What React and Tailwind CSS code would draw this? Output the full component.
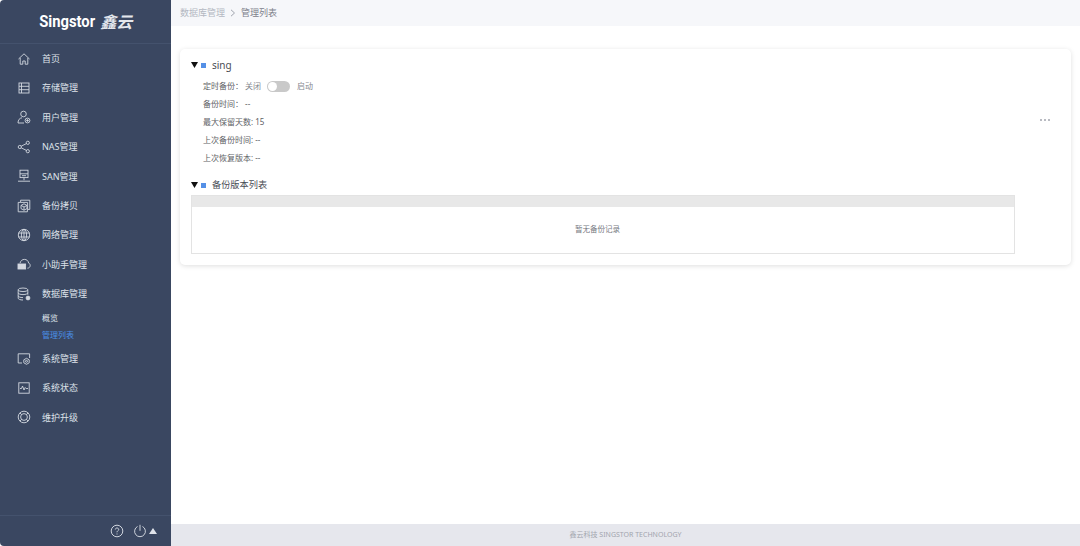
import React from 'react'

const Icon = ({ children }) => (
  <svg width="14" height="14" viewBox="0 0 14 14" fill="none" stroke="#d3d8e0" strokeWidth="0.9" className="shrink-0">
    {children}
  </svg>
)

const menuTop = [
  {
    label: '首页',
    icon: <path d="M1.5 7 7 1.8 12.5 7M3.2 6v6.2h2.6V9h2.4v3.2h2.6V6" />,
  },
  {
    label: '存储管理',
    icon: (
      <>
        <rect x="2" y="2" width="10" height="10" />
        <path d="M4.5 2v10M2 5.3h10M2 8.7h10" />
      </>
    ),
  },
  {
    label: '用户管理',
    icon: (
      <>
        <circle cx="6.5" cy="4" r="2.8" />
        <path d="M1 13c0-3 1.6-5 4-5.2M1 13h6" />
        <circle cx="10.5" cy="10.5" r="2.4" />
        <circle cx="10.5" cy="10.5" r="0.8" fill="#d3d8e0" />
      </>
    ),
  },
  {
    label: 'NAS管理',
    icon: (
      <>
        <circle cx="2.8" cy="7" r="1.6" />
        <circle cx="10.8" cy="2.8" r="1.6" />
        <circle cx="10.8" cy="11.2" r="1.6" />
        <path d="M4.2 6.2 9.4 3.6M4.2 7.8l5.2 2.6" />
      </>
    ),
  },
  {
    label: 'SAN管理',
    icon: (
      <>
        <rect x="3" y="1.2" width="8" height="7.4" />
        <path d="M3 4.8h8M7 8.6v2.6M1 12.2h12M5 6.7h4" />
      </>
    ),
  },
  {
    label: '备份拷贝',
    icon: (
      <>
        <path d="M1.2 3.4h2.400V1.200h9.200v9.200h-2.400v2.400H1.200z" />
        <path d="M3.600 3.400h7v7" />
        <path d="M7 4.800l3 1.600v3.200l-3 1.600-3-1.600V6.400zM4 6.400l3 1.600 3-1.600M7 8v3.200" />
      </>
    ),
  },
  {
    label: '网络管理',
    icon: (
      <>
        <circle cx="7" cy="7" r="5.7" />
        <ellipse cx="7" cy="7" rx="2.6" ry="5.7" />
        <path d="M7 1.3v11.4M1.5 5h11M1.5 9h11" />
      </>
    ),
  },
  {
    label: '小助手管理',
    icon: (
      <>
        <path d="M3 6.2C3.6 3.6 5.4 2.4 7.4 2.4c2.4 0 4 1.6 4.2 3.6 1 .4 1.6 1.4 1.6 2.4 0 1.6-1.2 2.8-2.8 2.8" />
        <rect x="1" y="7" width="7.6" height="5" fill="#d3d8e0" />
      </>
    ),
  },
  {
    label: '数据库管理',
    icon: (
      <>
        <ellipse cx="6" cy="2.8" rx="4.8" ry="1.8" />
        <path d="M1.2 2.8v8.4c0 1 2 1.8 4.8 1.8M10.8 2.8v5M1.2 5.8c0 1 2 1.8 4.8 1.8s4.800-.8 4.800-1.800M1.200 8.800c0 1 2 1.800 4.800 1.800" />
        <circle cx="11" cy="11" r="1.900" fill="#d3d8e0" />
      </>
    ),
  },
]

const menuBottom = [
  {
    label: '系统管理',
    icon: (
      <>
        <path d="M5 11H1.200V1.800h11.400V6" />
        <path d="M9.500 6.300l2.700 1.500v3l-2.700 1.500-2.700-1.500v-3z" />
        <circle cx="9.500" cy="9.300" r="1" />
      </>
    ),
  },
  {
    label: '系统状态',
    icon: (
      <>
        <rect x="1.800" y="1.800" width="10.400" height="10.400" />
        <path d="M3 7.500h1.500l1-2.500 1.500 4 1.200-2.500 1 1H11" />
      </>
    ),
  },
  {
    label: '维护升级',
    icon: (
      <>
        <circle cx="7" cy="7" r="5.800" />
        <circle cx="7" cy="7" r="3.400" />
        <path d="M2.900 2.900l1.700 1.700M11.100 2.900 9.400 4.600M2.900 11.100l1.700-1.700M11.100 11.100 9.400 9.400" />
      </>
    ),
  },
]

const MenuRow = ({ item }) => (
  <div className="flex h-[29.4px] items-center gap-[11px] pl-[17px] text-[9px] text-[#dfe3ea]">
    <Icon>{item.icon}</Icon>
    <span>{item.label}</span>
  </div>
)

const Sidebar = () => (
  <aside className="flex w-[171px] shrink-0 flex-col rounded-l-[4px] bg-[#3a4761]">
    <div className="flex h-[44px] items-center justify-center gap-[3px] border-b border-[#44526d] text-white">
      <span className="-mx-[4px] inline-block scale-x-[0.87] text-[17px] leading-none font-bold font-['Roboto',sans-serif]">Singstor</span>
      <span className="ml-[2px] text-[16px] leading-none font-bold italic text-[#e4e7ed]">鑫云</span>
    </div>
    <nav className="flex-1">
      {menuTop.map((item) => (
        <MenuRow key={item.label} item={item} />
      ))}
      <div className="flex h-[18px] items-center pl-[42px] text-[8px] text-[#dfe3ea]">概览</div>
      <div className="flex h-[17.5px] items-center pl-[42px] text-[8px] text-[#4a90e8]">管理列表</div>
      {menuBottom.map((item) => (
        <MenuRow key={item.label} item={item} />
      ))}
    </nav>
    <div className="flex h-[31px] items-center justify-end gap-[9px] border-t border-[#44526d] pr-[14px]">
      <svg width="14" height="14" viewBox="0 0 14 14" fill="none" stroke="#dfe3ea" strokeWidth="0.9">
        <circle cx="7" cy="7" r="5.800" />
        <path d="M5.300 5.500C5.400 4.500 6.100 4 7 4s1.700.6 1.700 1.500C8.700 6.800 7 6.700 7 8.300M7 9.500v1" />
      </svg>
      <div className="flex items-center gap-[2px]">
        <svg width="14" height="14" viewBox="0 0 14 14" fill="none" stroke="#dfe3ea" strokeWidth="0.9">
          <path d="M4.500 2.500a5.400 5.400 0 1 0 5 0M7 .8v6" />
        </svg>
        <svg width="8" height="6" viewBox="0 0 8 6" fill="#dfe3ea">
          <path d="M4 0 8 6H0z" />
        </svg>
      </div>
    </div>
  </aside>
)

const SectionTitle = ({ children, className }) => (
  <div className={`flex items-center ${className}`}>
    <svg width="7" height="6" viewBox="0 0 7 6" fill="#111" className="shrink-0">
      <path d="M0 0h7L3.500 6z" />
    </svg>
    <span className="ml-[3px] h-[5px] w-[5px] bg-[#5590e6]" />
    <span className="ml-[6px]">{children}</span>
  </div>
)

const InfoRow = ({ children }) => (
  <div className="flex h-[18px] items-center whitespace-pre text-[8px] text-[#606266]">{children}</div>
)

const Content = () => (
  <div className="flex min-w-0 flex-1 flex-col">
    <header className="flex h-[26px] items-center bg-[#f6f7fa] pl-[9px] text-[9px]">
      <span className="text-[#b3b7c2]">数据库管理</span>
      <svg width="6" height="8" viewBox="0 0 6 8" fill="none" stroke="#a0a4ae" strokeWidth="1" className="mx-[5px]">
        <path d="M1 .8 4.500 4 1 7.200" />
      </svg>
      <span className="text-[#7d808a]">管理列表</span>
    </header>
    <main className="flex-1 px-[9px] pt-[23px]">
      <div className="h-[216px] rounded-[5px] bg-white pt-[10px] pl-[11px] pr-[21px] shadow-[0_1px_5px_rgba(0,0,0,0.13)]">
        <div className="flex items-center justify-between">
          <div>
            <SectionTitle className="h-[12px] text-[10px] text-[#4a4d55]">sing</SectionTitle>
            <div className="mt-[6px] pl-[12px]">
              <InfoRow>
                <span>定时备份：</span>
                <span className="ml-[2px] text-[#85888f]">关闭</span>
                <span className="ml-[6px] flex h-[11px] w-[23px] items-center rounded-full bg-[#c9c9c9] pl-[1px]">
                  <span className="h-[9px] w-[9px] rounded-full bg-white" />
                </span>
                <span className="ml-[7px] text-[#85888f]">启动</span>
              </InfoRow>
              <InfoRow>备份时间： --</InfoRow>
              <InfoRow>最大保留天数: 15</InfoRow>
              <InfoRow>上次备份时间: --</InfoRow>
              <InfoRow>上次恢复版本: --</InfoRow>
            </div>
          </div>
          <div className="mt-[14px] flex gap-[2px]">
            <span className="h-[2px] w-[2px] bg-[#b9bbc2]" />
            <span className="h-[2px] w-[2px] bg-[#b9bbc2]" />
            <span className="h-[2px] w-[2px] bg-[#b9bbc2]" />
          </div>
        </div>
        <SectionTitle className="mt-[12px] h-[12px] text-[9.200px] text-[#4a4d55]">备份版本列表</SectionTitle>
        <div className="mt-[4px] w-[824px] border border-[#e3e3e3]">
          <div className="h-[11px] bg-[#e8e8e8]" />
          <div className="flex h-[46px] items-center justify-center pr-[11px] text-[7.500px] text-[#76797f]">暂无备份记录</div>
        </div>
      </div>
    </main>
    <footer className="flex h-[22px] items-center justify-center bg-[#e6e7ed] text-[7px] text-[#a2a5ae]">
      鑫云科技 SINGSTOR TECHNOLOGY
    </footer>
  </div>
)

export default function App() {
  return (
    <div className="flex h-[546px] w-[1080px] overflow-hidden bg-white font-['Noto_Sans','Noto_Sans_CJK_SC',sans-serif]">
      <Sidebar />
      <Content />
    </div>
  )
}
